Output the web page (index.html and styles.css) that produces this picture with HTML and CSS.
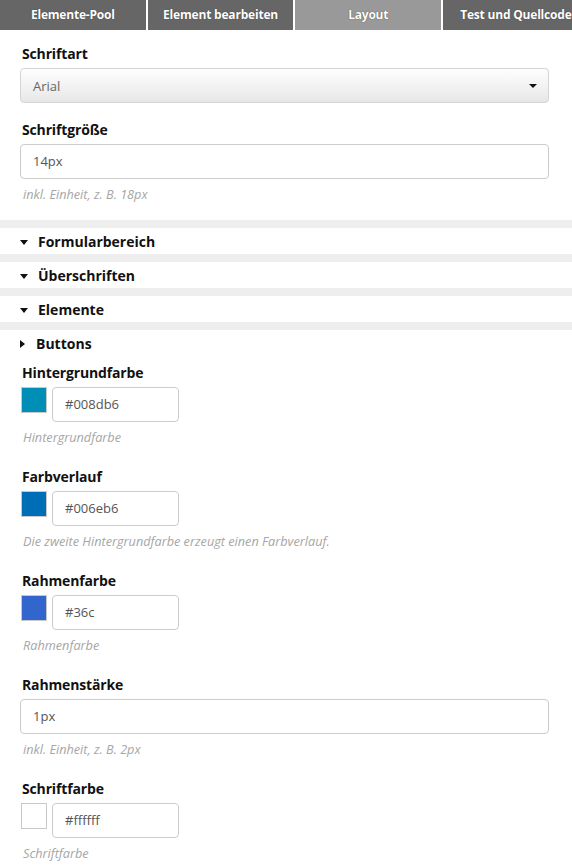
FILE: index.html
```html
<!DOCTYPE html>
<html lang="de">
<head>
<meta charset="utf-8">
<title>Layout</title>
<link rel="stylesheet" href="styles.css">
</head>
<body>
<nav class="tabs">
  <div class="tab">Elemente-Pool</div>
  <div class="tab">Element bearbeiten</div>
  <div class="tab active">Layout</div>
  <div class="tab">Test und Quellcode</div>
</nav>

<section class="block top">
  <div class="field">
    <div class="label">Schriftart</div>
    <div class="select"><span>Arial</span><span class="caret"></span></div>
  </div>
  <div class="field">
    <div class="label">Schriftgröße</div>
    <div class="input">14px</div>
    <div class="help">inkl. Einheit, z. B. 18px</div>
  </div>
</section>

<div class="group"><span class="tri down"></span>Formularbereich</div>
<div class="group"><span class="tri down"></span>Überschriften</div>
<div class="group"><span class="tri down"></span>Elemente</div>
<div class="group open"><span class="tri right"></span>Buttons</div>

<section class="block">
  <div class="field color">
    <div class="label">Hintergrundfarbe</div>
    <div class="row"><span class="swatch" style="background:#008db6"></span><div class="input short">#008db6</div></div>
    <div class="help">Hintergrundfarbe</div>
  </div>
  <div class="field color">
    <div class="label">Farbverlauf</div>
    <div class="row"><span class="swatch" style="background:#006eb6"></span><div class="input short">#006eb6</div></div>
    <div class="help">Die zweite Hintergrundfarbe erzeugt einen Farbverlauf.</div>
  </div>
  <div class="field color">
    <div class="label">Rahmenfarbe</div>
    <div class="row"><span class="swatch" style="background:#3366cc"></span><div class="input short">#36c</div></div>
    <div class="help">Rahmenfarbe</div>
  </div>
  <div class="field color">
    <div class="label">Rahmenstärke</div>
    <div class="input wide">1px</div>
    <div class="help">inkl. Einheit, z. B. 2px</div>
  </div>
  <div class="field color">
    <div class="label">Schriftfarbe</div>
    <div class="row"><span class="swatch" style="background:#ffffff"></span><div class="input short">#ffffff</div></div>
    <div class="help">Schriftfarbe</div>
  </div>
</section>
</body>
</html>
```

FILE: styles.css
```css
html, body {
  margin: 0;
  padding: 0;
  background: #fff;
}
body {
  font-family: "Open Sans", "Liberation Sans", sans-serif;
  color: #111;
  width: 572px;
  overflow: hidden;
}
.tabs {
  display: flex;
  gap: 2px;
  height: 30px;
  overflow: hidden;
  white-space: nowrap;
}
.tab {
  flex: 0 0 145.7px;
  background: #666;
  color: #fff;
  font-weight: 700;
  font-size: 12px;
  line-height: 30px;
  text-align: center;
  text-shadow: 0 0 1px #333;
  letter-spacing: -0.2px;
}
.tab.active {
  background: #999;
}
.block {
  padding: 14px 23px 17px 20px;
}
.field + .field {
  margin-top: 17px;
}
.label {
  font-size: 14px;
  font-weight: 700;
  line-height: 20px;
  margin: 0 0 4px 2px;
  color: #111;
  letter-spacing: -0.15px;
}
.select {
  height: 35px;
  box-sizing: border-box;
  border: 1px solid #d4d4d4;
  border-radius: 4px;
  background: linear-gradient(#fefefe, #e7e7e7);
  display: flex;
  align-items: center;
  justify-content: space-between;
  padding: 0 12px;
  font-size: 13px;
  color: #666;
}
.caret {
  width: 0;
  height: 0;
  border-left: 4px solid transparent;
  border-right: 4px solid transparent;
  border-top: 4px solid #111;
  margin-right: -1px;
}
.input {
  height: 35px;
  box-sizing: border-box;
  border: 1px solid #ccc;
  border-radius: 4px;
  background: #fff;
  padding: 0 12px;
  font-size: 13px;
  line-height: 33px;
  color: #555;
}
.input.wide {
  width: 529px;
}
.input.short {
  width: 127px;
}
.help {
  font-size: 12.7px;
  font-style: italic;
  line-height: 17px;
  color: #a6a6a6;
  margin: 7px 0 0 3px;
}
.row {
  display: flex;
  align-items: flex-start;
  gap: 5px;
}
.swatch {
  width: 26px;
  height: 26px;
  box-sizing: border-box;
  border: 1px solid #c8c8c8;
  margin-left: 1px;
}
.field.color + .field.color {
  margin-top: 21px;
}
.group {
  border-top: 8px solid #eee;
  height: 24px;
  padding-top: 2px;
  line-height: 26px;
  font-size: 14px;
  font-weight: 700;
  color: #111;
  display: flex;
  align-items: center;
}
.tri {
  display: inline-block;
  width: 0;
  height: 0;
  margin-left: 20px;
}
.tri.down {
  border-left: 4.5px solid transparent;
  border-right: 4.5px solid transparent;
  border-top: 5px solid #111;
  margin-right: 10px;
}
.tri.right {
  border-top: 4.5px solid transparent;
  border-bottom: 4.5px solid transparent;
  border-left: 5px solid #111;
  margin-right: 11px;
}
.group.open + .block {
  padding-top: 7px;
}
```
